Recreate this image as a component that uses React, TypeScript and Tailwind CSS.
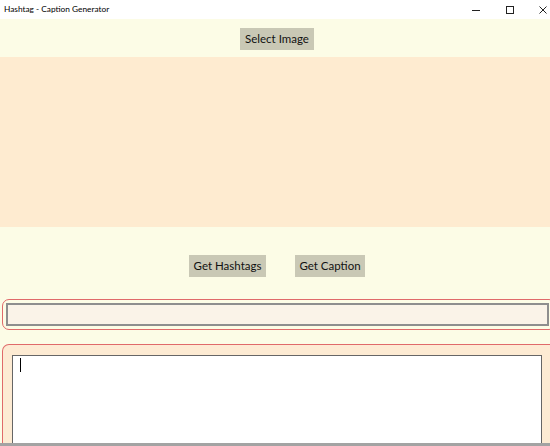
import React from "react";

export default function App() {
  const font = { fontFamily: 'Lato, "Noto Sans", sans-serif' };
  return (
    <div className="w-[550px] h-[446px] overflow-hidden flex flex-col bg-[#fcfce6]" style={font}>
      {/* title bar */}
      <div className="h-[19px] bg-white flex items-center shrink-0 relative">
        <span className="pl-[4px] text-[8.3px] leading-none text-black" style={{ fontFamily: 'Lato, sans-serif' }}>
          Hashtag - Caption Generator
        </span>
        <div className="ml-auto flex items-center h-full">
          <svg width="8" height="8" viewBox="0 0 8 8" className="mr-[26px]">
            <line x1="0" y1="4.5" x2="8" y2="4.5" stroke="#222" strokeWidth="1" />
          </svg>
          <svg width="8" height="8" viewBox="0 0 8 8" className="mr-[25px]">
            <rect x="0.5" y="0.5" width="7" height="7" fill="none" stroke="#222" strokeWidth="1" />
          </svg>
          <svg width="8" height="8" viewBox="0 0 8 8" className="mr-[3px]">
            <path d="M0.5 0.5 L7.5 7.5 M7.5 0.5 L0.5 7.5" stroke="#222" strokeWidth="1" />
          </svg>
        </div>
      </div>
      {/* select image row */}
      <div className="h-[38px] shrink-0 flex justify-center pt-[9px] pl-[4px]">
        <button className="w-[74px] h-[22px] bg-[#c9c8b5] text-[11.5px] text-[#111] leading-none">Select Image</button>
      </div>
      {/* image area */}
      <div className="h-[170px] shrink-0 bg-[#feebd0]" />
      {/* buttons */}
      <div className="h-[72px] shrink-0 flex justify-center pt-[28px] gap-[29px] pl-[4px]">
        <button className="w-[77px] h-[22px] bg-[#c9c8b5] text-[11.5px] text-[#111] leading-none">Get Hashtags</button>
        <button className="w-[70px] h-[22px] bg-[#c9c8b5] text-[11.5px] text-[#111] leading-none">Get Caption</button>
      </div>
      {/* hashtags box */}
      <div className="shrink-0 ml-[2px] mr-[-6px] h-[31px] border border-[#e06a6a] rounded-[7px] pl-[3px] pr-[6px] pt-[3px]">
        <div className="w-[543px] h-[23px] border-2 border-[#8e8e8e] bg-[#faf3e8]" />
      </div>
      {/* caption box */}
      <div className="flex-1 min-h-0 mt-[14px] ml-[2px] mr-[-6px] border border-[#e06a6a] border-b-0 rounded-t-[7px] bg-[#fdebd3] pl-[9px] pt-[10px] overflow-hidden">
        <div className="w-[530px] h-[120px] border-[1.5px] border-[#666] bg-white pl-[7px] pt-[2px]">
          <div className="w-[1px] h-[14px] bg-black" />
        </div>
      </div>
      <div className="h-[3px] shrink-0 bg-[#a3a3a3]" />
    </div>
  );
}
